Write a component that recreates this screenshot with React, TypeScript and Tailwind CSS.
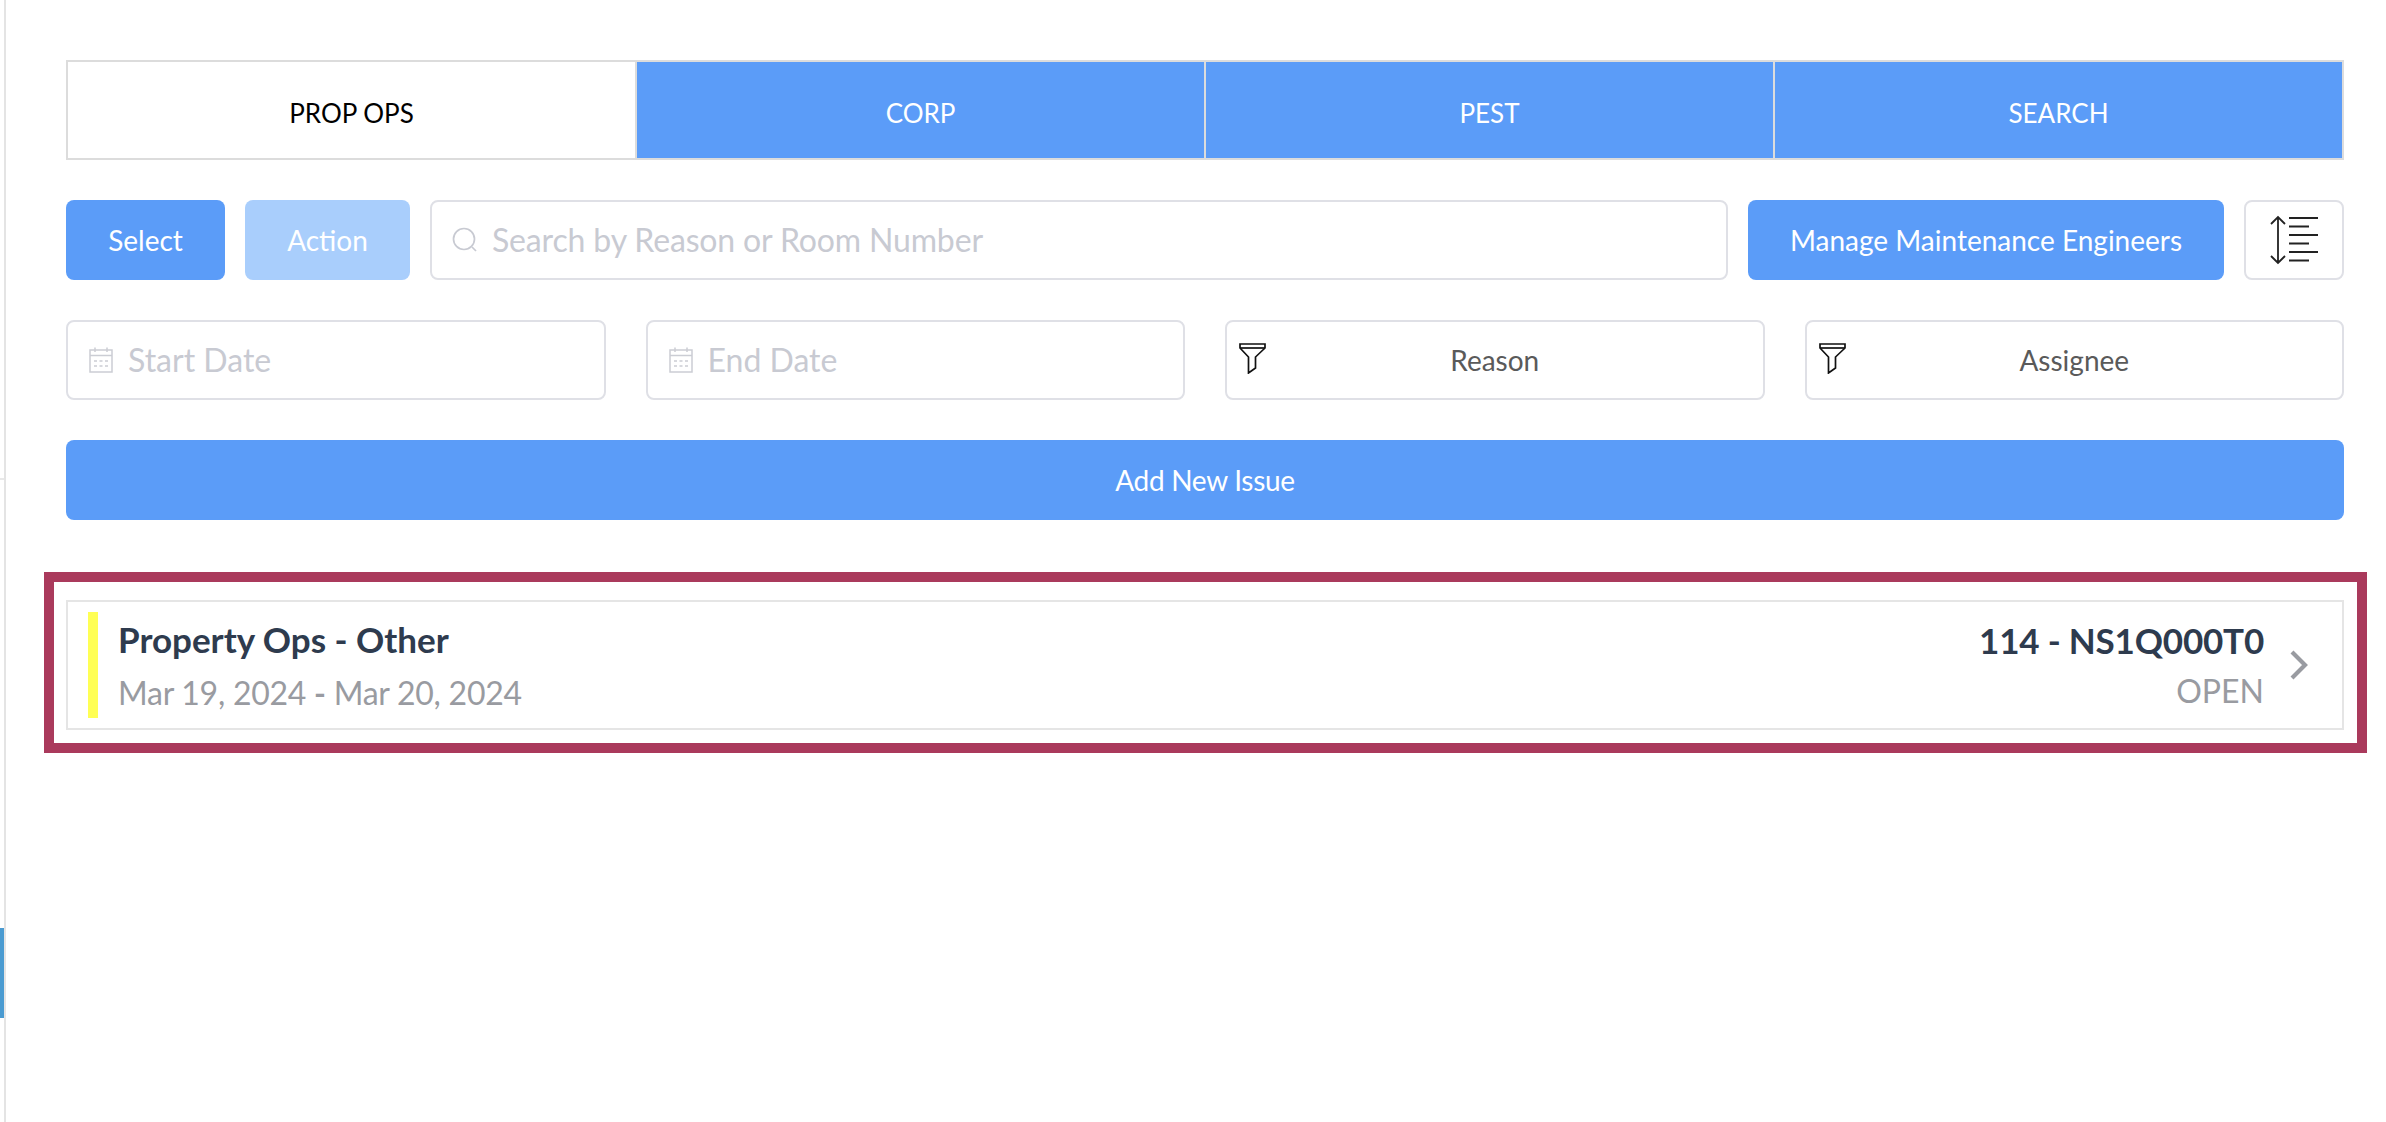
const BLUE = "bg-[#5b9cf8]";

function SearchIcon() {
  return (
    <svg width="26" height="26" viewBox="0 0 26 26" fill="none" stroke="#c8cad2" strokeWidth="1.7" className="shrink-0">
      <circle cx="12" cy="12" r="10.500" />
      <path d="M20 20l4 4" />
    </svg>
  );
}

function CalendarIcon() {
  return (
    <svg width="24" height="26" viewBox="0 0 24 26" fill="none" stroke="#cbcdd4" strokeWidth="1.5" className="shrink-0">
      <rect x="1" y="3" width="22" height="22" />
      <path d="M1 8.500h22M6 0.500v4.500M18 0.500v4.500" />
      <path d="M5 14h14M5 19h14" strokeDasharray="3 2.500" />
    </svg>
  );
}

function FilterIcon() {
  return (
    <svg width="27" height="31" viewBox="0 0 27 31" fill="none" stroke="#111" strokeWidth="1.7" className="shrink-0">
      <path d="M1 1h25v4L16.500 14v11L9.500 30V14L1 5z" />
      <path d="M1 5h25" />
    </svg>
  );
}

function LineHeightIcon() {
  return (
    <svg width="50" height="50" viewBox="0 0 50 50" fill="none" stroke="#222" strokeWidth="1.8">
      <path d="M9 2v46M2 9l7-7 7 7M2 41l7 7 7-7" />
      <path d="M20 3h29M20 11.500h20M20 20h29M20 28.500h20M20 37h29M20 45.500h20" />
    </svg>
  );
}

function Chevron() {
  return (
    <svg width="18" height="30" viewBox="0 0 18 30" fill="none" stroke="#999ba1" strokeWidth="4.200" className="ml-[26px] shrink-0">
      <path d="M2 2l13 13L2 28" />
    </svg>
  );
}

function Tab({ label, active }: { label: string; active?: boolean }) {
  return (
    <div
      className={
        active
          ? "flex flex-1 items-center justify-center bg-white pt-[6px] text-black"
          : `flex flex-1 items-center justify-center border-l-2 border-[#dcdcdc] pt-[6px] ${BLUE} text-white`
      }
    >
      {label}
    </div>
  );
}

function DateField({ label }: { label: string }) {
  return (
    <div className="flex h-[80px] items-center gap-[15px] rounded-lg border-2 border-[#dfe0e6] pl-[21px] text-[32px] text-[#c8cad2]">
      <CalendarIcon />
      {label}
    </div>
  );
}

function FilterField({ label }: { label: string }) {
  return (
    <div className="relative flex h-[80px] items-center justify-center rounded-lg border-2 border-[#dfe0e6] text-[28px] text-[#5a5a5a]">
      <span className="absolute left-[12px] top-[21px]">
        <FilterIcon />
      </span>
      {label}
    </div>
  );
}

export default function App() {
  return (
    <div className="flex h-[1122px] w-[2386px] overflow-hidden bg-white font-['Lato','Open_Sans',sans-serif]">
      <div className="relative w-[6px] shrink-0 border-r-2 border-[#e4e4e4]">
        <div className="absolute left-0 top-[478px] h-[2px] w-[4px] bg-[#e8e8e8]" />
        <div className="absolute left-0 top-[928px] h-[90px] w-[4px] bg-[#4a9bd1]" />
      </div>

      <div className="flex flex-1 flex-col pl-[60px] pr-[42px] pt-[60px]">
        <div className="flex h-[100px] border-2 border-[#dcdcdc] text-[26px]">
          <Tab label="PROP OPS" active />
          <Tab label="CORP" />
          <Tab label="PEST" />
          <Tab label="SEARCH" />
        </div>

        <div className="mt-[40px] flex h-[80px] gap-[20px] text-[28px]">
          <button className={`w-[159px] rounded-lg ${BLUE} text-white`}>Select</button>
          <button className="w-[165px] rounded-lg bg-[#a9cefc] text-white">Action</button>
          <div className="flex flex-1 items-center gap-[14px] rounded-lg border-2 border-[#dfe0e6] pl-[20px] text-[32px] tracking-[-0.15px] text-[#c8cad2]">
            <SearchIcon />
            Search by Reason or Room Number
          </div>
          <button className={`w-[476px] rounded-lg ${BLUE} text-white`}>Manage Maintenance Engineers</button>
          <div className="flex w-[100px] items-center justify-center rounded-lg border-2 border-[#dfe0e6]">
            <LineHeightIcon />
          </div>
        </div>

        <div className="mt-[40px] grid grid-cols-4 gap-[40px]">
          <DateField label="Start Date" />
          <DateField label="End Date" />
          <FilterField label="Reason" />
          <FilterField label="Assignee" />
        </div>

        <button className={`mt-[40px] h-[80px] rounded-lg ${BLUE} text-[28px] tracking-[-0.3px] text-white`}>Add New Issue</button>

        <div className="ml-[-22px] mr-[-23px] mt-[52px] border-[10px] border-[#aa3a5c] pb-[13px] pl-[12px] pr-[13px] pt-[18px]">
          <div className="flex h-[130px] items-center border-2 border-[#e5e5e5] pl-[20px] pr-[34px]">
            <div className="h-[106px] w-[10px] bg-[#ffff54]" />
            <div className="ml-[20px] flex-1">
              <div className="text-[35px] font-bold leading-[40px] text-[#2e3b4e]">Property Ops - Other</div>
              <div className="mt-[15px] text-[32px] leading-[38px] tracking-[-0.25px] text-[#999ba1]">
                Mar 19, 2024 <span className="font-bold">-</span> Mar 20, 2024
              </div>
            </div>
            <div className="text-right">
              <div className="text-[35px] font-bold leading-[40px] tracking-[-0.2px] text-[#2e3b4e]">114 - NS1Q000T0</div>
              <div className="mt-[12px] text-[32px] leading-[38px] text-[#999ba1]">OPEN</div>
            </div>
            <Chevron />
          </div>
        </div>
      </div>
    </div>
  );
}
